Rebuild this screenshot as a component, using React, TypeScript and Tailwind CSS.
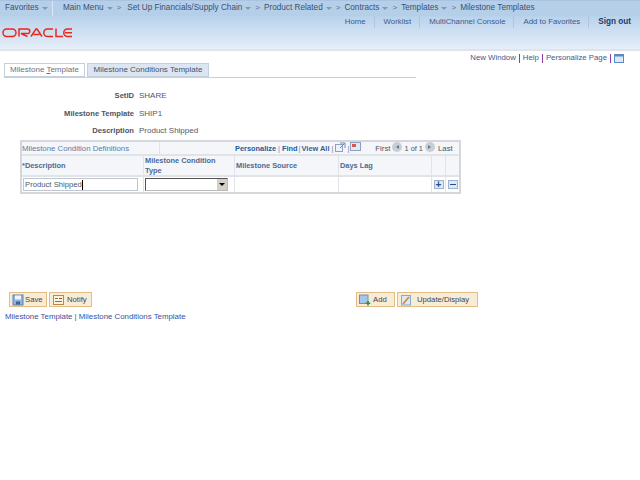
import React from 'react';

const crumbs = ['Set Up Financials/Supply Chain', 'Product Related', 'Contracts', 'Templates'];
const headerLinks = ['Home', 'Worklist', 'MultiChannel Console', 'Add to Favorites'];

function Caret() {
  return <span className="ml-[3px] inline-block h-0 w-0 border-x-[3px] border-t-[3px] border-x-transparent border-t-[#7f97b8] align-middle" />;
}

function Chevron() {
  return <span className="mx-[4px] text-[8px] text-[#5a6f8f]">&gt;</span>;
}

function NavBar() {
  return (
    <div className="flex h-[16px] items-center border-t border-[#a9c4e2] bg-[#b5cfe9] text-[8.2px] whitespace-nowrap text-[#3c4f70]">
      <div className="flex h-full w-[53px] items-center border-r border-[#dbe7f4] pl-[5px]">
        Favorites
        <Caret />
      </div>
      <div className="flex items-center pl-[10px]">
        Main Menu
        <Caret />
        <span className="mr-[2px]">
          <Chevron />
        </span>
        {crumbs.map((crumb) => (
          <span key={crumb} className="flex items-center">
            {crumb}
            <Caret />
            <Chevron />
          </span>
        ))}
        Milestone Templates
      </div>
    </div>
  );
}

function Header() {
  return (
    <div className="flex h-[35px] justify-between border-b-2 border-[#dfe3ea] bg-gradient-to-b from-[#b9d2ec] to-[#e6eef8]">
      <div className="pl-[2px] pt-[12px]">
        <svg width="70" height="10" viewBox="0 0 70 10" fill="none" stroke="#e8291c" strokeWidth="1.5">
          <rect x="1" y="1" width="13" height="7.5" rx="3.7" />
          <path d="M17 8.5V1h8.5a2.2 2.2 0 0 1 0 4.6H19l6.5 2.9" />
          <path d="M29 8.5l5-7.5h1l5 7.5M31.5 6.5h6" />
          <path d="M51 1h-5.5a3.7 3.7 0 0 0 0 7.5H51" />
          <path d="M54 .5v8h7" />
          <path d="M70 1h-4.5a3.7 3.7 0 0 0 0 7.5H70M63 4.7h7" />
        </svg>
      </div>
      <div className="flex h-[12px] items-center pr-[9px] text-[7.8px] whitespace-nowrap text-[#3d5a8c]">
        {headerLinks.map((link) => (
          <span key={link} className="mr-[9px] border-r border-[#b3c4d8] pr-[8px]">{link}</span>
        ))}
        <span className="text-[8.2px] font-bold text-[#1d3a6b]">Sign out</span>
      </div>
    </div>
  );
}

function Tabs() {
  return (
    <div className="ml-[4px] flex h-[14px] w-[412px] items-end border-b border-[#c6d0de] text-[8px] whitespace-nowrap">
      <div className="flex h-[14px] w-[81px] items-center justify-center border border-[#c3cfdd] bg-white text-[#6b7382]">
        <span>Milestone <span className="underline">T</span>emplate</span>
      </div>
      <div className="ml-[2px] flex h-[14px] w-[122px] items-center justify-center border border-[#c3cfdd] bg-[#dce6f2] text-[#44516a]">
        Milestone Conditions Template
      </div>
    </div>
  );
}

function FormRow({ label, value, className }: { label: string; value: string; className: string }) {
  return (
    <div className={`flex h-[10px] items-center whitespace-nowrap ${className}`}>
      <span className="w-[134px] text-right text-[7.6px] font-bold text-[#4d5563]">{label}</span>
      <span className="ml-[5px] text-[8px] text-[#50586a]">{value}</span>
    </div>
  );
}

function Button({ label, width, gap, icon }: { label: string; width: string; gap: string; icon: React.ReactNode }) {
  return (
    <div className={`flex h-[15px] items-center border border-[#e3bd84] bg-[#f8ecd6] pl-[1px] text-[7.7px] text-[#3d4553] ${width}`}>
      <svg width="14" height="12" viewBox="0 0 14 12">
        {icon}
      </svg>
      <span className={gap}>{label}</span>
    </div>
  );
}

function PagerArrow({ dir }: { dir: 'left' | 'right' }) {
  return (
    <span className="-mt-[3px] flex h-[10px] w-[10px] items-center justify-center rounded-full bg-[#c9ced6]">
      {dir === 'left' ? (
        <span className="h-0 w-0 border-y-[2.5px] border-r-[3px] border-y-transparent border-r-[#6d7480]" />
      ) : (
        <span className="h-0 w-0 border-y-[2.5px] border-l-[3px] border-y-transparent border-l-[#6d7480]" />
      )}
    </span>
  );
}

function ConditionGrid() {
  return (
    <div className="ml-[20px] mt-[4px] w-[441px] border-2 border-[#d4d7dc] text-[7.4px] whitespace-nowrap">
      <div className="flex h-[14px] items-center border-b-2 border-[#e0e3e8] bg-[#f4f6f9]">
        <div className="flex h-full w-[138px] items-center border-r border-[#e0e3e8] pt-[1px] text-[7.8px] text-[#5a7ca8]">Milestone Condition Definitions</div>
        <div className="ml-[75px] flex items-center pt-[1px] text-[#1f5c99]">
          <span className="font-bold">Personalize</span>
          <span className="mx-[2px] text-[#7a8aa0]">|</span>
          <span className="font-bold">Find</span>
          <span className="mx-[1px] text-[#7a8aa0]">|</span>
          <span className="font-bold text-[#3a5f8e]">View All</span>
          <span className="mx-[2px] text-[#7a8aa0]">|</span>
          <svg width="11" height="10" viewBox="0 0 11 10" className="-mt-[3px]">
            <rect x="0.5" y="2.5" width="7" height="7" fill="#eef3f9" stroke="#8aa2c0" />
            <path d="M5 1h5v5M9.5 1.5L5 6" fill="none" stroke="#6f8db3" />
          </svg>
          <span className="mx-[1px] text-[#7a8aa0]">|</span>
          <svg width="11" height="10" viewBox="0 0 11 10" className="-mt-[3px]">
            <rect x="0.5" y="0.5" width="10" height="8" fill="#dfe8f3" stroke="#8aa2c0" />
            <rect x="2" y="2" width="4" height="3" fill="#d9534f" />
          </svg>
          <span className="ml-[14px] text-[7.8px] text-[#4d5563]">First</span>
          <span className="ml-[2px]"><PagerArrow dir="left" /></span>
          <span className="mx-[2px] text-[7.4px] text-[#4d5563]">1 of 1</span>
          <PagerArrow dir="right" />
          <span className="ml-[3px] text-[7.8px] text-[#4d5563]">Last</span>
        </div>
      </div>
      <div className="flex h-[21px] border-b-2 border-[#e0e3e8] bg-[#f4f6f9] font-bold leading-[10px] text-[#4d6a94]">
        <div className="flex w-[122px] items-center border-r border-[#e0e3e8]">*Description</div>
        <div className="flex w-[91px] items-center whitespace-normal border-r border-[#e0e3e8] pl-[1px]">Milestone Condition Type</div>
        <div className="flex w-[104px] items-center border-r border-[#e0e3e8] pl-[1px]">Milestone Source</div>
        <div className="flex w-[93px] items-center border-r border-[#e0e3e8] pl-[1px]">Days Lag</div>
        <div className="w-[14px] border-r border-[#e0e3e8]" />
      </div>
      <div className="flex h-[15px] bg-white">
        <div className="flex w-[122px] items-center border-r border-[#e0e3e8] pl-[1px]">
          <div className="flex h-[13px] w-[115px] items-center border border-[#bfc6d0] pl-[1px] text-[7.7px] text-[#50586a]">
            Product Shipped<span className="h-[10px] w-px bg-black" />
          </div>
        </div>
        <div className="flex w-[91px] items-center border-r border-[#e0e3e8] pl-[1px]">
          <div className="flex h-[13px] w-[83px] justify-end border border-[#555] border-b-[#bbb] border-r-[#bbb]">
            <span className="flex w-[10px] items-center justify-center bg-[#d4d0c8]">
              <span className="h-0 w-0 border-x-[3px] border-t-[3px] border-x-transparent border-t-black" />
            </span>
          </div>
        </div>
        <div className="w-[104px] border-r border-[#e0e3e8]" />
        <div className="w-[93px] border-r border-[#e0e3e8]" />
        <div className="flex w-[14px] items-center justify-center border-r border-[#e0e3e8]">
          <span className="flex h-[9px] w-[10px] items-center justify-center border border-[#9fb2c9] bg-[#dfe8f3] text-[10px] font-bold leading-none text-[#1f4f8f]">+</span>
        </div>
        <div className="flex flex-1 items-center justify-center">
          <span className="flex h-[9px] w-[10px] items-center justify-center border border-[#9fb2c9] bg-[#dfe8f3]">
            <span className="h-px w-[6px] bg-[#1f4f8f]" />
          </span>
        </div>
      </div>
    </div>
  );
}

export default function App() {
  return (
    <div className="h-[480px] w-[640px] overflow-hidden bg-white font-['Liberation_Sans',Arial,sans-serif]">
      <NavBar />
      <Header />
      <div className="flex h-[12px] items-center justify-end pr-[16px] pt-[2px] text-[7.8px] whitespace-nowrap text-[#3d5a8c]">
        <span>New Window</span>
        <span className="mx-[3px] h-[9px] w-px bg-[#8a3f9d]" />
        <span>Help</span>
        <span className="mx-[3px] h-[9px] w-px bg-[#8a3f9d]" />
        <span>Personalize Page</span>
        <span className="mx-[3px] h-[9px] w-px bg-[#8a3f9d]" />
        <svg width="10" height="9" viewBox="0 0 10 9">
          <rect x="0.5" y="0.5" width="9" height="8" fill="#dce8f5" stroke="#5b8ac0" />
          <rect x="0.5" y="0.5" width="9" height="2" fill="#5b8ac0" />
        </svg>
      </div>
      <div className="mt-[1px]">
        <Tabs />
      </div>
      <FormRow label="SetID" value="SHARE" className="mt-[13px]" />
      <FormRow label="Milestone Template" value="SHIP1" className="mt-[8px]" />
      <FormRow label="Description" value="Product Shipped" className="mt-[7px]" />
      <ConditionGrid />
      <div className="ml-[9px] mt-[98px] flex w-[469px] whitespace-nowrap">
        <Button
          label="Save"
          width="w-[38px]"
          gap="ml-[0px]"
          icon={
            <>
              <rect x="2" y="1" width="10" height="10" fill="#8fb4e0" stroke="#5d83b5" />
              <rect x="4" y="1.5" width="6" height="4" fill="#eef4fb" />
              <rect x="5" y="7.5" width="4" height="3" fill="#3f6496" />
            </>
          }
        />
        <Button
          label="Notify"
          width="ml-[2px] w-[43px]"
          gap="ml-[2px]"
          icon={
            <>
              <rect x="2.5" y="1.5" width="10" height="9" fill="#fbf3dc" stroke="#b58a4a" />
              <path d="M4 4.5h3M4 7.5h7" stroke="#4f8f3f" />
              <path d="M8 4.5h3" stroke="#c0392b" />
            </>
          }
        />
        <div className="flex-1" />
        <Button
          label="Add"
          width="w-[39px]"
          gap="ml-[1px]"
          icon={
            <>
              <rect x="1.5" y="1" width="8.5" height="8.5" fill="#a8c4e6" stroke="#6d90bd" />
              <path d="M10 7v4.5M7.8 9.2h4.5" stroke="#2f8f3f" strokeWidth="1.6" />
            </>
          }
        />
        <Button
          label="Update/Display"
          width="ml-[2px] w-[81px]"
          gap="ml-[4px]"
          icon={
            <>
              <rect x="2.5" y="1.5" width="9" height="9.5" fill="#dbe8f6" stroke="#8aa8cc" />
              <path d="M4 10l6-7" stroke="#d9822b" strokeWidth="1.6" />
            </>
          }
        />
      </div>
      <div className="ml-[5px] mt-[5px] text-[7.85px] leading-[10px] whitespace-nowrap text-[#3d4f9a]">
        Milestone Template | Milestone Conditions Template
      </div>
    </div>
  );
}
